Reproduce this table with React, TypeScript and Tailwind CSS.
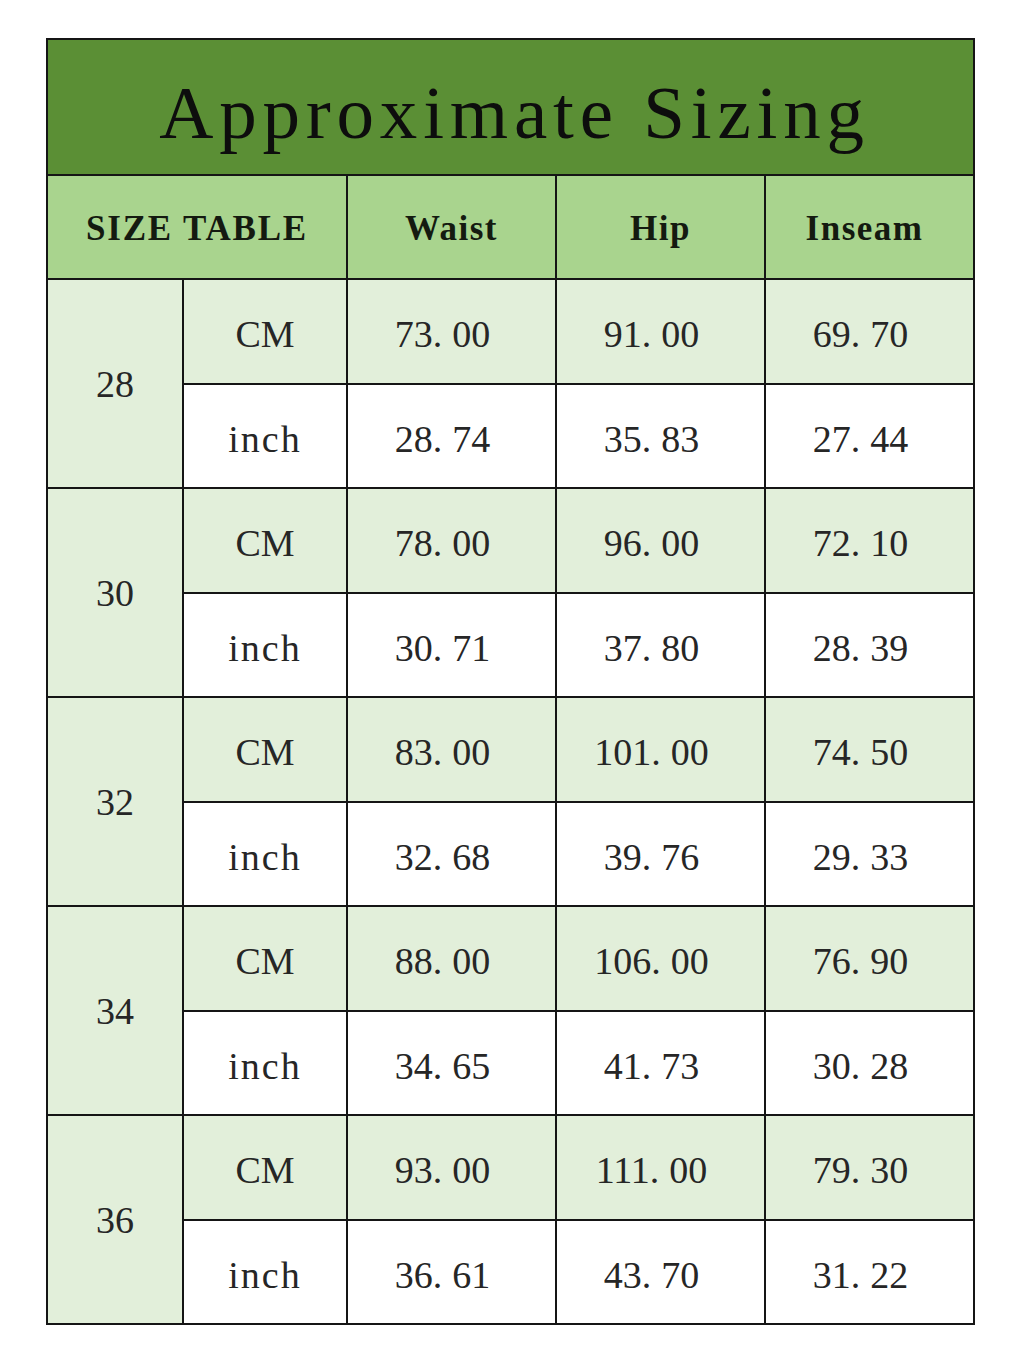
import React from "react";

type Row = { size: string; cm: [string, string, string]; inch: [string, string, string] };

const rows: Row[] = [
  { size: "28", cm: ["73.00", "91.00", "69.70"], inch: ["28.74", "35.83", "27.44"] },
  { size: "30", cm: ["78.00", "96.00", "72.10"], inch: ["30.71", "37.80", "28.39"] },
  { size: "32", cm: ["83.00", "101.00", "74.50"], inch: ["32.68", "39.76", "29.33"] },
  { size: "34", cm: ["88.00", "106.00", "76.90"], inch: ["34.65", "41.73", "30.28"] },
  { size: "36", cm: ["93.00", "111.00", "79.30"], inch: ["36.61", "43.70", "31.22"] },
];

const serif = { fontFamily: '"Liberation Serif", "Times New Roman", serif' };

function Num({ v }: { v: string }) {
  const [a, b] = v.split(".");
  return (
    <span className="pr-[18px]">
      {a}.<span className="ml-[10px]">{b}</span>
    </span>
  );
}

function Cell({ children, light }: { children: React.ReactNode; light: boolean }) {
  return (
    <div
      className={`flex items-center justify-center pt-[6px] text-[38px] leading-none text-[#262626] ${
        light ? "bg-[#e2efda]" : "bg-white"
      }`}
    >
      {children}
    </div>
  );
}

export default function App() {
  return (
    <div className="min-h-[1365px] w-[1024px] bg-white pt-[38px] pl-[46px]" style={serif}>
      <div className="grid w-[929px] grid-cols-[134px_162px_207px_207px_207px] grid-rows-[134px_102px_repeat(10,102.5px)] gap-[2px] bg-[#151515] p-[2px]">
        <div className="col-span-5 flex items-center justify-center bg-[#5b8f35] pt-[10px] pl-[8px]">
          <span className="text-[75px] leading-none tracking-[5.8px] text-[#0d0d0d]">Approximate Sizing</span>
        </div>
        <div className="col-span-2 flex items-center justify-center bg-[#a9d48e] pt-[4px] text-[35px] font-bold tracking-[1.8px] text-[#141a10]">
          SIZE TABLE
        </div>
        <div className="flex items-center justify-center bg-[#a9d48e] pt-[4px] text-[35px] font-bold tracking-[1.5px] text-[#141a10]">
          Waist
        </div>
        <div className="flex items-center justify-center bg-[#a9d48e] pt-[4px] text-[35px] font-bold tracking-[1.5px] text-[#141a10]">
          Hip
        </div>
        <div className="flex items-center justify-center bg-[#a9d48e] pt-[4px] pr-[10px] text-[35px] font-bold tracking-[1.5px] text-[#141a10]">
          Inseam
        </div>
        {rows.map((r) => (
          <React.Fragment key={r.size}>
            <div className="row-span-2 flex items-center justify-center bg-[#e2efda] text-[38px] leading-none text-[#262626]">
              {r.size}
            </div>
            <Cell light>CM</Cell>
            {r.cm.map((v, i) => (
              <Cell key={"c" + i} light>
                <Num v={v} />
              </Cell>
            ))}
            <Cell light={false}>
              <span className="tracking-[2px]">inch</span>
            </Cell>
            {r.inch.map((v, i) => (
              <Cell key={"i" + i} light={false}>
                <Num v={v} />
              </Cell>
            ))}
          </React.Fragment>
        ))}
      </div>
    </div>
  );
}
